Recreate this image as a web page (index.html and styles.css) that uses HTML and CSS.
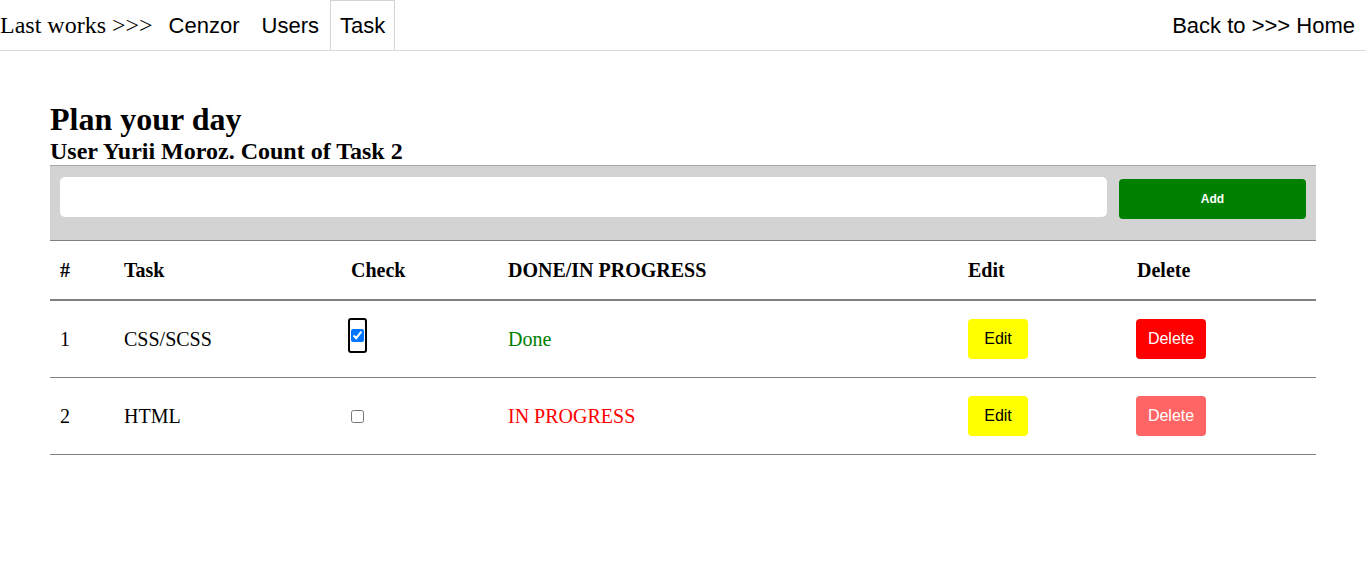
FILE: index.html
```html
<!DOCTYPE html>
<html lang="en">
<head>
<meta charset="utf-8">
<title>Plan your day</title>
<link rel="stylesheet" href="styles.css">
</head>
<body>
<nav class="topnav">
  <div class="nav-left">
    <span class="brand">Last works &gt;&gt;&gt;</span>
    <a class="nav-link" href="#">Cenzor</a>
    <a class="nav-link" href="#">Users</a>
    <a class="nav-link active" href="#">Task</a>
  </div>
  <a class="nav-link home" href="#">Back to &gt;&gt;&gt; Home</a>
</nav>
<main class="content">
  <h1 class="title">Plan your day</h1>
  <h2 class="subtitle">User Yurii Moroz. Count of Task 2</h2>
  <form class="add-form">
    <input class="task-input" type="text">
    <button class="add-btn" type="button">Add</button>
  </form>
  <table class="tasks">
    <colgroup>
      <col class="c-num"><col class="c-task"><col class="c-check"><col class="c-status"><col class="c-edit"><col class="c-del">
    </colgroup>
    <thead>
      <tr><th>#</th><th>Task</th><th>Check</th><th>DONE/IN PROGRESS</th><th>Edit</th><th>Delete</th></tr>
    </thead>
    <tbody>
      <tr>
        <td>1</td>
        <td>CSS/SCSS</td>
        <td><span class="check-focus"><input class="check in-focus" type="checkbox" checked></span></td>
        <td class="done">Done</td>
        <td><button class="edit-btn" type="button">Edit</button></td>
        <td><button class="del-btn" type="button">Delete</button></td>
      </tr>
      <tr>
        <td>2</td>
        <td>HTML</td>
        <td><input class="check" type="checkbox"></td>
        <td class="progress">IN PROGRESS</td>
        <td><button class="edit-btn" type="button">Edit</button></td>
        <td><button class="del-btn faded" type="button">Delete</button></td>
      </tr>
    </tbody>
  </table>
</main>
</body>
</html>
```
FILE: styles.css
```css
html, body {
  margin: 0;
  padding: 0;
  background: #fff;
  color: #000;
}
body {
  font-family: "Liberation Serif", "Times New Roman", serif;
}
.topnav {
  display: flex;
  justify-content: space-between;
  align-items: stretch;
  height: 50px;
  border-bottom: 1px solid #d9d9d9;
}
.nav-left {
  display: flex;
  align-items: stretch;
}
.brand {
  display: flex;
  align-items: center;
  font-family: "Liberation Serif", serif;
  font-size: 24px;
  padding-right: 5px;
}
.nav-link {
  display: flex;
  align-items: center;
  padding: 0 10px;
  font-family: "Liberation Sans", Arial, sans-serif;
  font-size: 22px;
  color: #000;
  text-decoration: none;
  border: 1px solid transparent;
  border-bottom: 0;
}
.nav-link.active {
  border-color: #d4d4d4;
  padding: 0 9px;
}
.content {
  padding: 50px 50px 0 50px;
}
.title {
  margin: 0;
  font-size: 32px;
  font-weight: bold;
}
.subtitle {
  margin: 0;
  font-size: 24px;
  font-weight: bold;
}
.add-form {
  display: flex;
  align-items: flex-start;
  gap: 12px;
  margin: 0;
  padding: 11px 10px 21px 10px;
  background: #d3d3d3;
  border-top: 1px solid #a6a6a6;
  border-bottom: 1px solid #808080;
}
.task-input {
  flex: 1;
  height: 40px;
  box-sizing: border-box;
  border: none;
  border-radius: 5px;
  background: #fff;
  margin: 0;
  padding: 0 10px;
}
.add-btn {
  width: 187px;
  height: 40px;
  margin: 2px 0 0 0;
  border: none;
  border-radius: 4px;
  background: #008000;
  color: #fff;
  font-family: "Liberation Sans", Arial, sans-serif;
  font-size: 12px;
  font-weight: bold;
}
.tasks {
  width: 100%;
  border-collapse: collapse;
  table-layout: fixed;
  font-size: 20px;
}
.c-num { width: 64px; }
.c-task { width: 227px; }
.c-check { width: 157px; }
.c-status { width: 460px; }
.c-edit { width: 169px; }
.c-del { width: 189px; }
.tasks th {
  text-align: left;
  font-weight: bold;
  padding: 18px 10px;
  line-height: 22px;
  border-bottom: 2px solid #808080;
  vertical-align: middle;
}
.tasks td {
  padding: 18px 10px;
  border-bottom: 1px solid #808080;
  vertical-align: middle;
  height: 40px;
}
.check {
  margin: 3px 3px 3px 0;
  width: 13px;
  height: 13px;
}
.check.in-focus {
  margin: 0;
}
.check-focus {
  display: inline-flex;
  align-items: center;
  height: 31px;
  padding: 0 1px;
  margin: -2px 0 5px -3px;
  border: 2px solid #000;
  border-radius: 3px;
  vertical-align: middle;
}
.done { color: #008000; }
.progress { color: #ff0000; }
.edit-btn, .del-btn {
  height: 40px;
  border: none;
  border-radius: 4px;
  font-family: "Liberation Sans", Arial, sans-serif;
  font-size: 16px;
  padding: 0;
  vertical-align: middle;
}
.edit-btn {
  width: 60px;
  background: #ffff00;
  color: #000;
}
.del-btn {
  width: 70px;
  background: #ff0000;
  color: #fff;
  margin-left: -1px;
}
.del-btn.faded {
  opacity: 0.6;
}
```
